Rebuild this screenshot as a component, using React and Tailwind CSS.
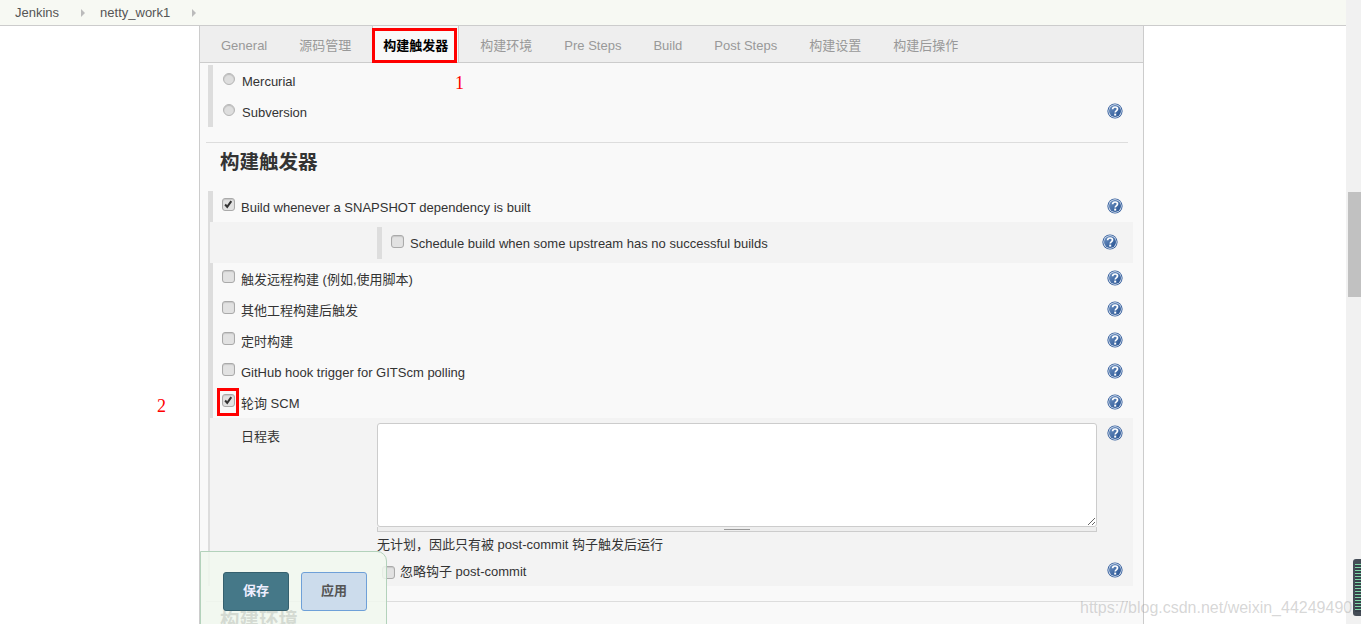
import React from 'react'

const cjk = "font-['Liberation_Sans','Noto_Sans_CJK_SC',sans-serif]"

function HelpIcon() {
    return (
        <svg width="16" height="16" viewBox="0 0 16 16" className="shrink-0">
            <defs>
                <linearGradient id="helpFill" x1="0" y1="0" x2="1" y2="1">
                    <stop offset="0" stopColor="#7094c4" />
                    <stop offset="1" stopColor="#234f8f" />
                </linearGradient>
            </defs>
            <circle cx="8" cy="8" r="7.6" fill="#2f5a9a" />
            <circle cx="8" cy="8" r="6.7" fill="#e8eef6" />
            <circle cx="8" cy="8" r="6" fill="url(#helpFill)" />
            <path d="M5.6 6.2C5.7 4.7 6.8 4 8.1 4c1.4 0 2.4.8 2.4 2 0 1.9-2.3 1.9-2.3 3.6" fill="none" stroke="#fff" strokeWidth="1.7" />
            <rect x="7.2" y="10.6" width="2" height="2" fill="#fff" />
        </svg>
    )
}

function Checkbox({ checked }) {
    return (
        <span className="relative block w-[13px] h-[13px] shrink-0 rounded-[3px] border border-[#aaa] bg-[#e2e2e2] shadow-[inset_0_1px_1px_rgba(0,0,0,0.12)]">
            {checked && (
                <svg viewBox="0 0 13 13" className="absolute left-0 top-0 w-[11px] h-[11px]">
                    <path d="M2.5 6.5L5 9.3L9.8 2.6" fill="none" stroke="#333" strokeWidth="2.4" />
                </svg>
            )}
        </span>
    )
}

function Radio() {
    return <span className="block ml-[1px] w-[12px] h-[12px] shrink-0 rounded-full border border-[#b5b5b5] bg-[#dedede] shadow-[inset_0_1px_1px_rgba(0,0,0,0.15)]"></span>
}

function Row({ label, checked, radio, noHelp }) {
    return (
        <div className="flex items-center h-[31px] pl-[9px] pr-[10px]">
            <div className={radio ? "-mt-[3px]" : "-mt-[4px]"}>{radio ? <Radio /> : <Checkbox checked={checked} />}</div>
            <span className={`${radio ? 'ml-[7px]' : 'ml-[6px]'} mt-[2px] text-[13px] text-[#333]`}>{label}</span>
            {!noHelp && <div className="ml-auto -mt-[2px]"><HelpIcon /></div>}
        </div>
    )
}

const tabs = ["General", "源码管理", "构建触发器", "构建环境", "Pre Steps", "Build", "Post Steps", "构建设置", "构建后操作"]

function App() {
    return (
        <div className={`relative h-[624px] overflow-hidden bg-white ${cjk}`}>
            {/* breadcrumb */}
            <div className="flex items-center h-[26px] pl-[15px] bg-[#f7f9f3] border-b border-[#ccc] text-[13px] text-[#555]">
                <span className="mt-[1px]">Jenkins</span>
                <span className="ml-[22px] w-0 h-0 border-y-[4px] border-y-transparent border-l-[4px] border-l-[#bbb]"></span>
                <span className="ml-[15px] mt-[1px]">netty_work1</span>
                <span className="ml-[22px] w-0 h-0 border-y-[4px] border-y-transparent border-l-[4px] border-l-[#bbb]"></span>
            </div>

            <div className="flex h-[598px]">
                <div className="w-[199px] shrink-0"></div>
                <div className="w-[945px] shrink-0 overflow-hidden border-x border-[#ccc] bg-[#f9f9f9]">
                    {/* tabs */}
                    <div className="flex gap-[12px] h-[37px] pl-[11px] bg-[#eee] border-b border-[#ccc] text-[13px] text-[#999]">
                        {tabs.map((tab, index) => (
                            <div key={index} className={index === 2
                                ? "flex items-center h-[36px] -mx-[1px] pt-[3px] px-[10px] bg-[#f9f9f9] border-x border-[#ccc] font-bold text-black"
                                : "flex items-center h-[36px] pt-[3px] px-[10px]"}>
                                {tab}
                            </div>
                        ))}
                    </div>

                    <div className="mt-[2px] ml-2 w-[925px] border-l-[5px] border-[#ddd]">
                        <Row label="Mercurial" radio noHelp />
                        <Row label="Subversion" radio />
                    </div>

                    <div className="mt-[15px] ml-[6px] mr-[15px] border-t border-[#ddd]"></div>
                    <h2 className="mt-[7px] ml-[20px] text-[19.5px] leading-[24px] font-bold text-[#333]">构建触发器</h2>

                    <div className="mt-[17px] ml-2 w-[925px] border-l-[5px] border-[#ddd]">
                        <Row label="Build whenever a SNAPSHOT dependency is built" checked />
                        <div className="-ml-[3px] h-[41px] pt-[5px] pl-[167px] bg-[#f3f3f3]">
                            <div className="flex items-center h-[32px] border-l-[5px] border-[#ddd] pl-[9px] pr-[15px]">
                                <div className="-mt-[3px]"><Checkbox /></div>
                                <span className="ml-[6px] mt-[1px] text-[13px] text-[#333]">Schedule build when some upstream has no successful builds</span>
                                <div className="ml-auto -mt-[3px]"><HelpIcon /></div>
                            </div>
                        </div>
                        <Row label="触发远程构建 (例如,使用脚本)" />
                        <Row label="其他工程构建后触发" />
                        <Row label="定时构建" />
                        <Row label="GitHub hook trigger for GITScm polling" />
                        <Row label="轮询 SCM" checked />

                        {/* schedule */}
                        <div className="-ml-[3px] h-[168px] bg-[#f3f3f3] pt-[5px] text-[13px] text-[#333]">
                            <div className="flex">
                                <div className="w-[167px] shrink-0 pl-[31px] pt-[4px]">日程表</div>
                                <div className="w-[720px] shrink-0">
                                    <textarea className="block w-[720px] h-[104px] bg-white border border-[#ccc] rounded-[3px] outline-none"></textarea>
                                    <div className="flex flex-col items-center justify-center gap-[1px] h-[5px] bg-[#eee] border-x border-b border-[#ccc]">
                                        <span className="block w-[26px] h-[1px] bg-[#999]"></span>
                                    </div>
                                    <p className="mt-[4px] leading-[18px]">无计划，因此只有被 post-commit 钩子触发后运行</p>
                                    <div className="flex items-center mt-[8px]">
                                        <div className="ml-[5px] mt-[1px]"><Checkbox /></div>
                                        <span className="ml-[5px]">忽略钩子 post-commit</span>
                                    </div>
                                </div>
                                <div className="ml-[10px] mt-[2px]"><HelpIcon /></div>
                            </div>
                            <div className="flex justify-end -mt-[20px] pr-[10px]"><HelpIcon /></div>
                        </div>
                    </div>

                    <div className="mt-[15px] ml-[6px] mr-[15px] border-t border-[#ddd]"></div>
                    <h2 className="mt-[6px] ml-[20px] text-[19.5px] leading-[24px] font-bold text-[#333]">构建环境</h2>
                </div>
                <div className="flex-1"></div>
                {/* scrollbar */}
                <div className="w-[15px] shrink-0 pl-[2px] -mt-[26px] h-[624px] bg-[#f1f1f1]">
                    <div className="mt-[192px] h-[105px] bg-[#c1c1c1]"></div>
                </div>
            </div>

            {/* floating save bar */}
            <div className="absolute left-[200px] top-[551px] w-[187px] h-[90px] flex gap-[12px] pl-[22px] pt-[20px] bg-[#f1f8ee]/85 border border-[#b3d2bb] rounded-tr-[10px]">
                <button className="w-[66px] h-[39px] pb-[2px] rounded-[3px] bg-[#457888] border border-[#35606e] text-[13px] font-bold text-[#eef]">保存</button>
                <button className="w-[66px] h-[39px] pb-[2px] rounded-[3px] bg-[#ccdcec] border border-[#6ea0d8] text-[13px] font-bold text-[#555]">应用</button>
            </div>

            {/* annotations */}
            <div className="absolute left-[372px] top-[28px] w-[85px] h-[35px] border-[3px] border-[#f00]"></div>
            <div className="absolute left-[217px] top-[388px] w-[22px] h-[28px] border-[3px] border-[#f00]"></div>
            <span className="absolute left-[455px] top-[70px] font-['Liberation_Serif',serif] text-[18px] text-[#f00]">1</span>
            <span className="absolute left-[157px] top-[393px] font-['Liberation_Serif',serif] text-[18px] text-[#f00]">2</span>

            {/* watermark */}
            <span className="absolute left-[1080px] top-[596px] text-[16px] text-[#999]/40">https://blog.csdn.net/weixin_44249490</span>

            {/* corner widget */}
            <div className="absolute left-[1353px] top-[559px] w-[8px] h-[57px] rounded-l-[3px] bg-[#454d57] pl-[2px] pt-[5px]">
                <div className="h-[48px] bg-[repeating-linear-gradient(to_bottom,#7fd8a8_0,#7fd8a8_1px,#39424c_1px,#39424c_3px)]"></div>
            </div>
        </div>
    )
}

export default App
